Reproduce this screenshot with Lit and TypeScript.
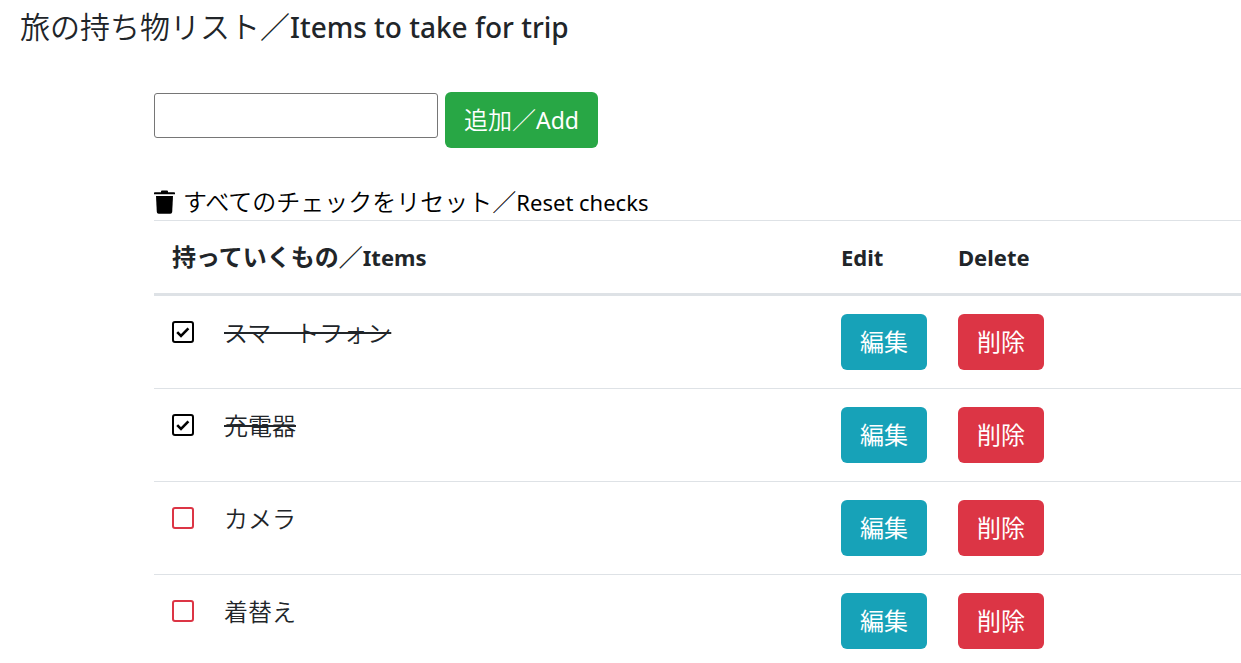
import { LitElement, html, css, svg } from "lit";
import { customElement, state } from "lit/decorators.js";
import { classMap } from "lit/directives/class-map.js";

interface Item {
  name: string;
  packed: boolean;
}

const trashIcon = svg`
  <path d="M7 2.2V1.4Q7 .4 8 .4h5Q14 .4 14 1.4v.8h6.2q.8 0 .8.8v1.3H0V3q0-.8.8-.8z" />
  <path d="M2 6h17l-.8 16q-.1 1.8-1.9 1.8H4.7q-1.8 0-1.9-1.8z" />
`;

@customElement("app-root")
export class AppRoot extends LitElement {
  static styles = css`
    :host {
      display: block;
      padding: 9px 0 13px;
      background: #fff;
      color: #212529;
      font-family: "Noto Sans", "Noto Sans CJK JP", sans-serif;
      font-size: 24px;
      line-height: 36px;
    }
    .ja {
      font-family: "Noto Sans CJK JP", sans-serif;
      font-weight: 350;
    }
    .title {
      margin: 0 20px 47px;
      font-size: 30px;
      font-weight: 500;
      line-height: 36px;
    }
    .title .en {
      font-size: 28px;
    }
    .en {
      font-size: 22px;
    }
    span.ja,
    .en {
      line-height: 1;
    }
    .content {
      margin-left: 154px;
    }
    .add {
      display: flex;
      align-items: flex-start;
      gap: 7px;
      margin-bottom: 36px;
    }
    .field {
      box-sizing: border-box;
      width: 284px;
      height: 45px;
      margin-top: 1px;
      padding: 1px 6px;
      border: 1px solid #767676;
      border-radius: 3px;
      background: #fff;
      color: inherit;
      font: inherit;
    }
    .btn {
      box-sizing: border-box;
      display: block;
      height: 56px;
      padding: 0 19px;
      border: 0;
      border-radius: 6px;
      color: #fff;
      font: inherit;
      white-space: nowrap;
      cursor: pointer;
    }
    .btn .en {
      font-size: 23px;
    }
    .success {
      background: #28a745;
    }
    .info {
      background: #17a2b8;
    }
    .danger {
      background: #dc3545;
    }
    .reset {
      display: flex;
      align-items: center;
      gap: 8px;
      height: 36px;
      padding: 0;
      border: 0;
      background: none;
      color: #000;
      font: inherit;
      cursor: pointer;
    }
    .trash {
      width: 21px;
      height: 24px;
    }
    .items {
      width: 100%;
      table-layout: fixed;
      border-spacing: 0;
    }
    .col-edit {
      width: 117px;
    }
    .col-delete {
      width: 301px;
    }
    th {
      padding: 18px;
      border-top: 1px solid #dee2e6;
      border-bottom: 3px solid #dee2e6;
      text-align: left;
      font-weight: 700;
    }
    th .ja {
      font-weight: 600;
    }
    td {
      padding: 18px;
      vertical-align: top;
    }
    tr + tr td {
      border-top: 1px solid #dee2e6;
    }
    .item {
      display: flex;
      align-items: center;
      gap: 30px;
    }
    .check {
      appearance: none;
      box-sizing: border-box;
      flex: none;
      width: 22px;
      height: 22px;
      margin: 0;
      border: 2px solid #dc3545;
      border-radius: 3px;
    }
    .check:checked {
      border-color: #000;
      background: url("data:image/svg+xml,%3Csvg xmlns='http://www.w3.org/2000/svg' viewBox='0 0 18 18'%3E%3Cpath d='M3.2 9.2 7 13 14.4 5.4' fill='none' stroke='%23000' stroke-width='2.6'/%3E%3C/svg%3E")
        center / 18px 18px no-repeat;
    }
    .packed {
      text-decoration: line-through;
      text-decoration-thickness: 2px;
    }
  `;

  @state() private items: Item[] = [
    { name: "スマートフォン", packed: true },
    { name: "充電器", packed: true },
    { name: "カメラ", packed: false },
    { name: "着替え", packed: false },
  ];

  private toggle(index: number) {
    this.items = this.items.map((item, i) =>
      i === index ? { ...item, packed: !item.packed } : item
    );
  }

  private reset() {
    this.items = this.items.map((item) => ({ ...item, packed: false }));
  }

  private remove(index: number) {
    this.items = this.items.filter((_, i) => i !== index);
  }

  private add(event: Event) {
    event.preventDefault();
    const field = this.renderRoot.querySelector<HTMLInputElement>(".field")!;
    const name = field.value.trim();
    if (name) {
      this.items = [...this.items, { name, packed: false }];
      field.value = "";
    }
  }

  private renderItem(item: Item, index: number) {
    return html`
      <tr>
        <td>
          <div class="item">
            <input
              class="check"
              type="checkbox"
              id="item-${index}"
              .checked=${item.packed}
              @change=${() => this.toggle(index)}
            />
            <label for="item-${index}" class=${classMap({ ja: true, packed: item.packed })}>${item.name}</label>
          </div>
        </td>
        <td><button class="btn info ja" type="button">編集</button></td>
        <td>
          <button class="btn danger ja" type="button" @click=${() => this.remove(index)}>削除</button>
        </td>
      </tr>
    `;
  }

  render() {
    return html`
      <h1 class="title"><span class="ja">旅の持ち物リスト／</span><span class="en">Items to take for trip</span></h1>
      <main class="content">
        <form class="add" @submit=${this.add}>
          <input class="field" type="text" aria-labelledby="add-button" />
          <button class="btn success" id="add-button" type="submit"><span class="ja">追加／</span><span class="en">Add</span></button>
        </form>
        <button class="reset" type="button" @click=${this.reset}>
          <svg class="trash" viewBox="0 0 21 24" aria-hidden="true">${trashIcon}</svg>
          <span><span class="ja">すべてのチェックをリセット／</span><span class="en">Reset checks</span></span>
        </button>
        <table class="items">
          <colgroup>
            <col />
            <col class="col-edit" />
            <col class="col-delete" />
          </colgroup>
          <thead>
            <tr>
              <th scope="col"><span class="ja">持っていくもの／</span><span class="en">Items</span></th>
              <th scope="col"><span class="en">Edit</span></th>
              <th scope="col"><span class="en">Delete</span></th>
            </tr>
          </thead>
          <tbody>
            ${this.items.map((item, index) => this.renderItem(item, index))}
          </tbody>
        </table>
      </main>
    `;
  }
}
